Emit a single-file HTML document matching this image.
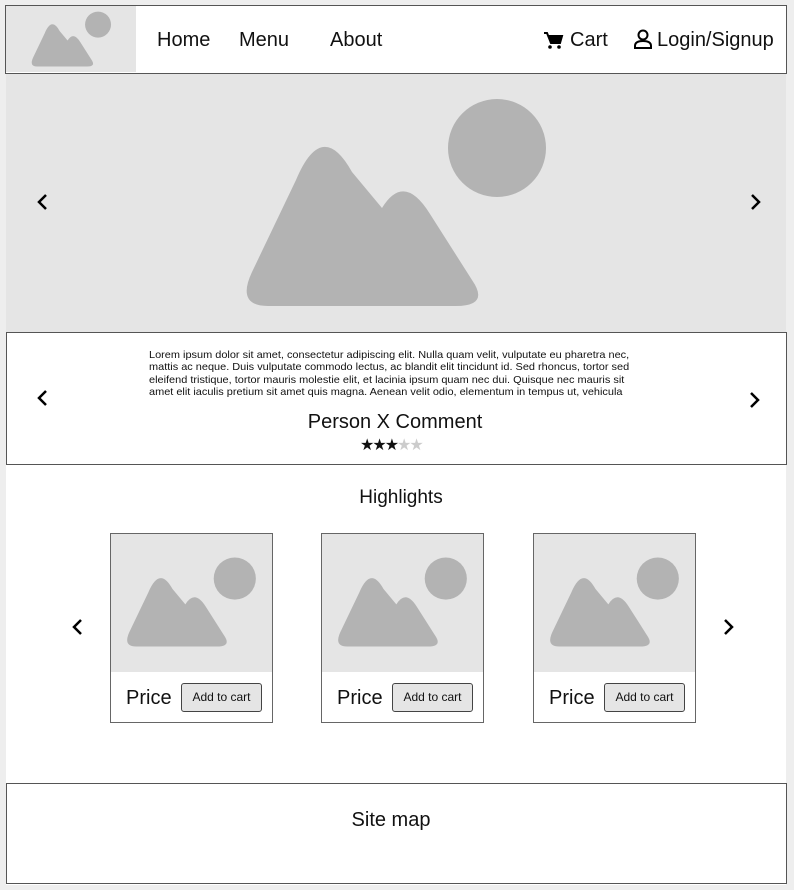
<!DOCTYPE html>
<html><head><meta charset="utf-8"><style>
*{margin:0;padding:0;box-sizing:border-box}
body{width:794px;height:890px;background:#eeeeee;font-family:"Liberation Sans",Arial,sans-serif;position:relative;overflow:hidden;color:#111}
.abs{position:absolute}
.nav{font-size:20px;top:29px}
</style></head><body>
<div class="abs" style="left:6px;top:5px;width:780px;height:880px;background:#fff"></div>
<div class="abs" style="left:5px;top:5px;width:782px;height:69px;border:1px solid #555;background:#fff"></div>
<div class="abs" style="left:6px;top:6px;width:130px;height:66px;background:#e5e5e5"></div>
<div class="abs" style="left:6px;top:74px;width:780px;height:258px;background:#e5e5e5"></div>
<svg class="abs" style="left:0;top:0" width="794" height="890">
<defs><g id="m"><path d="M268,306 Q236,306 252,272 L296,180 Q322,118 352,172 L382,208 Q404,172 430,214 L472,280 Q490,306 456,306 Z" fill="#b3b3b3"/><circle cx="497" cy="148" r="49" fill="#b3b3b3"/></g></defs>
<use href="#m"/>
<g transform="translate(31,23) scale(.265) translate(-244,-142)"><use href="#m"/></g>
<rect x="111" y="534" width="161" height="138" fill="#e5e5e5"/>
<rect x="322" y="534" width="161" height="138" fill="#e5e5e5"/>
<rect x="534" y="534" width="161" height="138" fill="#e5e5e5"/>
<g transform="translate(126,576) scale(.43) translate(-244,-142)"><use href="#m"/></g>
<g transform="translate(337,576) scale(.43) translate(-244,-142)"><use href="#m"/></g>
<g transform="translate(549,576) scale(.43) translate(-244,-142)"><use href="#m"/></g>
<g fill="none" stroke="#000" stroke-width="2.5">
<path d="M46,195 L39,202 L46,209"/><path d="M752,195 L759,202 L752,209"/>
<path d="M46,391 L39,398 L46,405"/><path d="M751,393 L758,400 L751,407"/>
<path d="M81,620 L74,627 L81,634"/><path d="M725,620 L732,627 L725,634"/>
</g>
<path d="M544,33 h3 l4,10 h9 l2,-7 h-13" fill="none" stroke="#000" stroke-width="2"/><path d="M548,36 h14 l-2,7 h-10z" fill="#000"/><circle cx="550" cy="47" r="1.8"/><circle cx="559" cy="47" r="1.8"/>
<circle cx="643" cy="35" r="4.5" fill="none" stroke="#000" stroke-width="2"/><path d="M635,48 v-2 q0,-5 8,-5 q8,0 8,5 v2 z" fill="none" stroke="#000" stroke-width="2"/>
</svg>
<div class="abs nav" style="left:157px">Home</div>
<div class="abs nav" style="left:239px">Menu</div>
<div class="abs nav" style="left:330px">About</div>
<div class="abs nav" style="left:570px">Cart</div>
<div class="abs nav" style="left:657px">Login/Signup</div>
<div class="abs" style="left:6px;top:332px;width:781px;height:133px;border:1px solid #555"></div>
<div class="abs" style="left:149px;top:350px;font-size:10.3px;line-height:12.3px;color:#111;white-space:nowrap;transform:scaleX(1.062);transform-origin:0 0">Lorem ipsum dolor sit amet, consectetur adipiscing elit. Nulla quam velit, vulputate eu pharetra nec,<br>mattis ac neque. Duis vulputate commodo lectus, ac blandit elit tincidunt id. Sed rhoncus, tortor sed<br>eleifend tristique, tortor mauris molestie elit, et lacinia ipsum quam nec dui. Quisque nec mauris sit<br>amet elit iaculis pretium sit amet quis magna. Aenean velit odio, elementum in tempus ut, vehicula</div>
<div class="abs" style="left:0;width:790px;text-align:center;top:411px;font-size:20px">Person X Comment</div>
<div class="abs" style="left:360px;top:435px;font-size:16px;letter-spacing:-2px">★★★<span style="color:#ccc">★★</span></div>
<div class="abs" style="left:0;width:802px;text-align:center;top:487px;font-size:19px">Highlights</div>
<div class="abs" style="left:110px;top:533px;width:163px;height:190px;border:1px solid #666"></div>
<div class="abs" style="left:321px;top:533px;width:163px;height:190px;border:1px solid #666"></div>
<div class="abs" style="left:533px;top:533px;width:163px;height:190px;border:1px solid #666"></div>
<div class="abs" style="left:126px;top:687px;font-size:20px">Price</div>
<div class="abs" style="left:337px;top:687px;font-size:20px">Price</div>
<div class="abs" style="left:549px;top:687px;font-size:20px">Price</div>
<div class="abs" style="left:181px;top:683px;width:81px;height:29px;border:1px solid #444;border-radius:3px;background:#e5e5e5;font-size:12px;text-align:center;line-height:27px">Add to cart</div>
<div class="abs" style="left:392px;top:683px;width:81px;height:29px;border:1px solid #444;border-radius:3px;background:#e5e5e5;font-size:12px;text-align:center;line-height:27px">Add to cart</div>
<div class="abs" style="left:604px;top:683px;width:81px;height:29px;border:1px solid #444;border-radius:3px;background:#e5e5e5;font-size:12px;text-align:center;line-height:27px">Add to cart</div>
<div class="abs" style="left:6px;top:783px;width:781px;height:101px;border:1px solid #555"></div>
<div class="abs" style="left:0;width:782px;text-align:center;top:809px;font-size:20px">Site map</div>
</body></html>
